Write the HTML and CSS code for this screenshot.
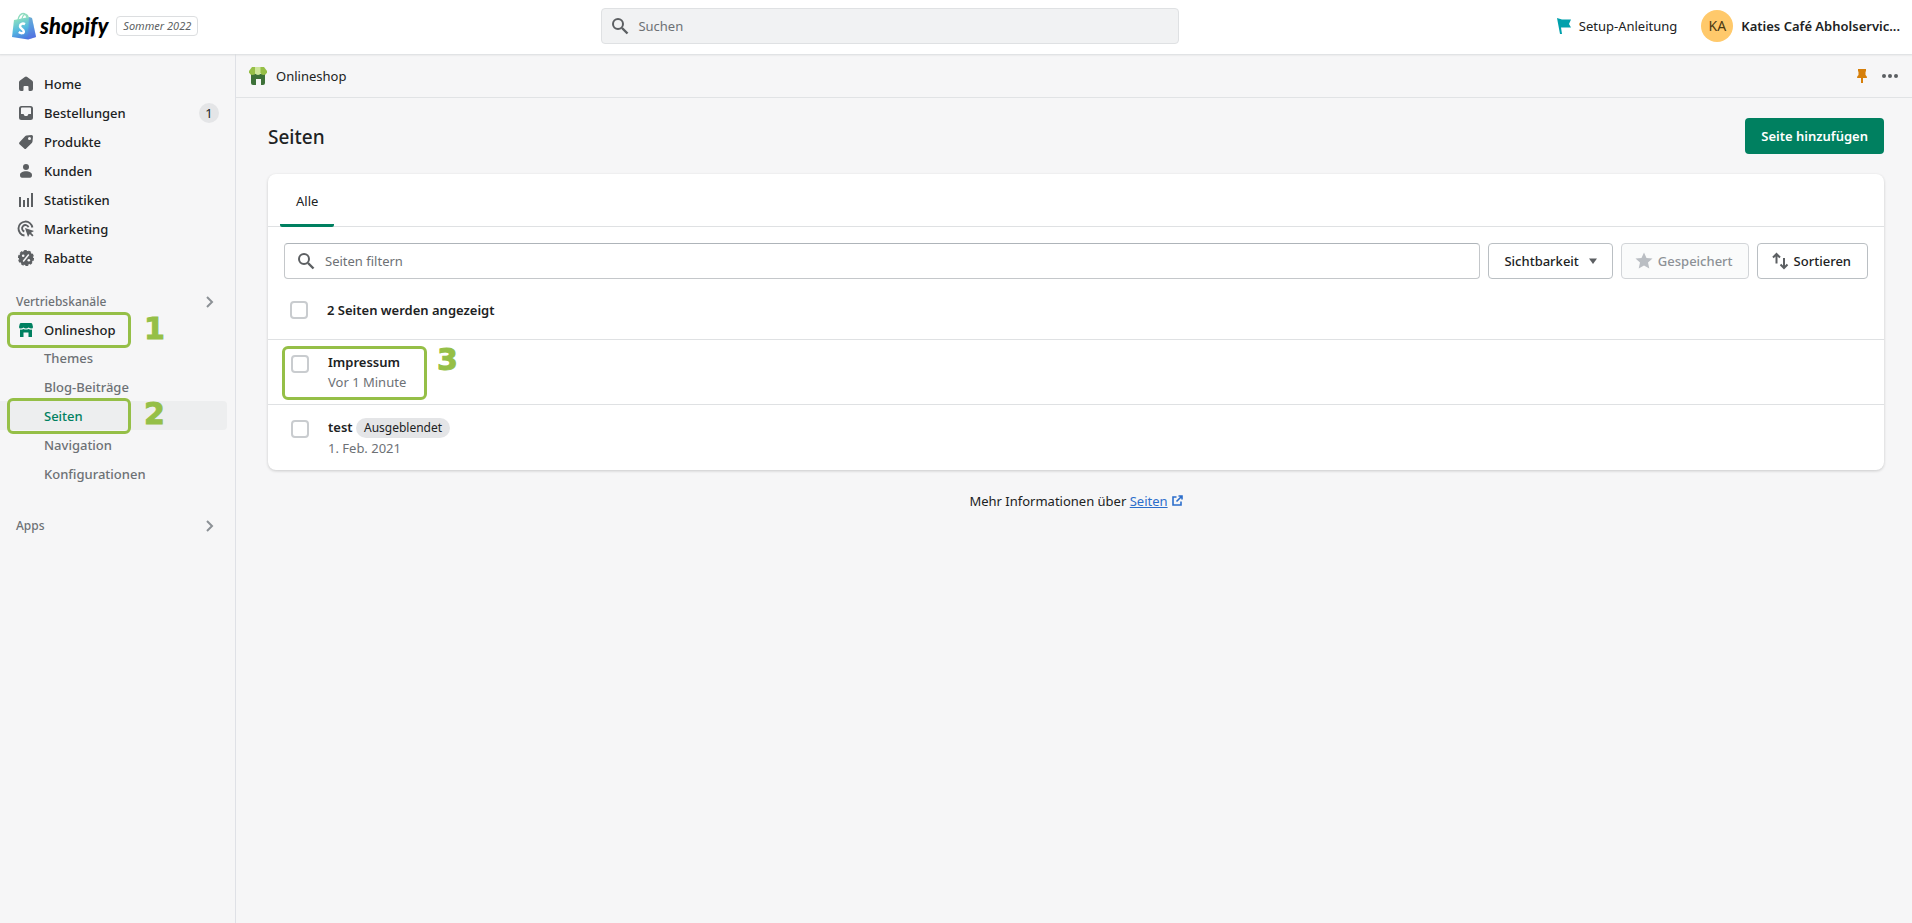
FILE: index.html
```html
<!DOCTYPE html>
<html lang="de">
<head>
<meta charset="utf-8">
<meta name="viewport" content="width=device-width, initial-scale=1">
<title>Seiten</title>
<link rel="stylesheet" href="styles.css">
</head>
<body>
<header class="topbar">
  <div class="brand">
    <svg class="bag" viewBox="0 0 26 28" aria-hidden="true">
      <defs><linearGradient id="bag" x1="0.3" y1="0" x2="0.7" y2="1"><stop offset="0" stop-color="#8fe3bd"/><stop offset=".5" stop-color="#55b9e0"/><stop offset="1" stop-color="#4a6be0"/></linearGradient></defs>
      <path d="M3 8 18 5l3 1 4 19-8 2.500L1 25z" fill="url(#bag)"/>
      <path d="m18 5 3 1 4 19-8 2.500z" fill="#5f78e0" opacity=".45"/>
      <path d="M7 8c.5-4 3-6.500 5-6.500S15.500 3 16 6M11 7c.5-3 2-5 4-4.500 1.500.4 2 1.500 2.300 3" fill="none" stroke="#8fdcc0" stroke-width="1.300"/>
      <path d="M14 12.200c-2.200-1.200-5-.5-5 2 0 2.800 3.800 2.800 3.800 5.200 0 2.200-2.800 2.200-5 .6" fill="none" stroke="#fff" stroke-width="2.500"/>
    </svg>
    <span class="wordmark">shopify</span>
    <span class="edition">Sommer 2022</span>
  </div>
  <label class="search">
    <svg class="icon" viewBox="0 0 20 20" aria-hidden="true"><circle cx="8" cy="8" r="5" fill="none" stroke="#5c5f62" stroke-width="2"/><path d="m12 12 5.500 5.500" stroke="#5c5f62" stroke-width="2.400"/></svg>
    <input type="search" placeholder="Suchen" aria-label="Suchen">
  </label>
  <div class="account">
    <button class="setup" type="button">
      <svg class="flag" viewBox="0 0 14 16" aria-hidden="true"><path d="m0 0 5 1.500h9L12 6l2 3.500H4L5 16H3z" fill="#00a0ac"/></svg>
      Setup-Anleitung
    </button>
    <button class="user" type="button"><span class="avatar">KA</span><span>Katies Café Abholservic...</span></button>
  </div>
</header>
<div class="shell">
  <nav class="sidebar">
    <a class="item" href="#"><svg class="icon" viewBox="0 0 20 20" aria-hidden="true"><path d="M8.800 3 3.700 6.800Q3 7.300 3 8.300V15q0 2 2 2h1.500q1 0 1-1v-3q0-1 1-1h3q1 0 1 1v3q0 1 1 1H15q2 0 2-2V8.300q0-1-.7-1.500L11.200 3Q10 2.200 8.800 3z"/></svg><span>Home</span></a>
    <a class="item" href="#"><svg class="icon" viewBox="0 0 20 20" aria-hidden="true"><path fill-rule="evenodd" d="M5.500 3h9Q17 3 17 5.500v9q0 2.500-2.500 2.500h-9Q3 17 3 14.500v-9Q3 3 5.500 3zm.5 1.600Q5 4.600 5 5.600V11h2.500l1.200 2h2.600l1.200-2H15V5.600q0-1-1-1z"/></svg><span>Bestellungen</span><span class="count">1</span></a>
    <a class="item" href="#"><svg class="icon" viewBox="0 0 20 20" aria-hidden="true"><path fill-rule="evenodd" d="M10.500 3.500 15.500 3Q17 3 17 4.500l-.5 5q-.1.800-.7 1.400l-5.600 5.600q-1 1-2 0L3.500 12.300q-1-1 0-2l5.600-6.100q.6-.6 1.400-.7zM13.500 5a1.500 1.500 0 1 0 0 3 1.500 1.500 0 0 0 0-3z"/></svg><span>Produkte</span></a>
    <a class="item" href="#"><svg class="icon" viewBox="0 0 20 20" aria-hidden="true"><circle cx="10" cy="6" r="3"/><path d="M4 14c0-5 12-5 12 0q0 2.800-2 2.800H6q-2 0-2-2.800z"/></svg><span>Kunden</span></a>
    <a class="item" href="#"><svg class="icon" viewBox="0 0 20 20" aria-hidden="true"><path d="M3 7h2v10H3zm4 3h2v7H7zm4-2h2v9h-2zm4-5h2v14h-2z"/></svg><span>Statistiken</span></a>
    <a class="item" href="#"><svg class="icon" viewBox="0 0 20 20" aria-hidden="true"><path d="M8.500 16.500A7 7 0 1 1 16.400 8.500M8.300 12.500A3.300 3.300 0 1 1 12.500 8.300" fill="none" stroke="#5c5f62" stroke-width="1.900"/><path d="m9 9 9 3-3 1.800 2.500 2.500-1.200 1.200L13.800 15 12 18z"/></svg><span>Marketing</span></a>
    <a class="item" href="#"><svg class="icon" viewBox="0 0 20 20" aria-hidden="true"><circle cx="10" cy="10" r="7.200"/><circle cx="10" cy="10" r="7.300" fill="none" stroke="#5c5f62" stroke-width="1.500" stroke-dasharray="2.800 1.780"/><path d="m12.800 6.500-5.600 7" stroke="#f6f6f7" stroke-width="1.500"/><circle cx="7.200" cy="7.800" r="1.300" fill="#f6f6f7"/><circle cx="12.800" cy="12.200" r="1.300" fill="#f6f6f7"/></svg><span>Rabatte</span></a>

    <button class="section" type="button"><span>Vertriebskanäle</span><svg class="chevron" viewBox="0 0 8 12" aria-hidden="true"><path d="m1 1 5 5-5 5" fill="none" stroke="#8c9196" stroke-width="2"/></svg></button>
    <a class="item channel marked" href="#"><svg class="icon shop" viewBox="0 0 20 20" aria-hidden="true"><path d="M5 3h10q1 0 1.300 1L17 7q0 1.500-1.500 1.500T12.500 7.500q-1 1-2.500 1T7.500 7.500q-1 1-3 1Q3 8.500 3 7l.7-3Q4 3 5 3z"/><path d="M4 9.600q2 .3 3.500-.6 2.500 1 5 0 1.500.9 3.500.6V17h-3.500v-4.500h-5V17H4z"/></svg><span>Onlineshop</span><b class="step">1</b></a>
    <a class="item sub" href="#">Themes</a>
    <a class="item sub" href="#">Blog-Beiträge</a>
    <a class="item sub current marked" href="#" aria-current="page">Seiten<b class="step">2</b></a>
    <a class="item sub" href="#">Navigation</a>
    <a class="item sub" href="#">Konfigurationen</a>
    <button class="section apps" type="button"><span>Apps</span><svg class="chevron" viewBox="0 0 8 12" aria-hidden="true"><path d="m1 1 5 5-5 5" fill="none" stroke="#8c9196" stroke-width="2"/></svg></button>
  </nav>
  <div class="content">
    <div class="appbar">
      <svg class="appicon" viewBox="0 0 18 18" aria-hidden="true"><path d="M2 7h14v9q0 2-2 2h-2v-6H7v6H4q-2 0-2-2z" fill="#3d7138"/><path d="M3 0h4v6q-1 2-3.500 2T0 5.500V4z" fill="#96bf47"/><path d="M6 0h6v6q-1 2-3 2T6 6z" fill="#cde59a"/><path d="M11.500 0H15l3 4v1.500Q17 8 14.500 8T11.500 6z" fill="#96bf47"/></svg>
      <span>Onlineshop</span>
      <div class="appactions">
        <button class="plain" type="button" aria-label="Anheften"><svg class="pin" viewBox="0 0 10 14" aria-hidden="true"><path d="M1 0h8v2L8.500 3v3q1.500 1 1.500 3H6v5H4V9H0q0-2 1.500-3V3L1 2z" fill="#d67f0a"/></svg></button>
        <button class="plain" type="button" aria-label="Mehr Aktionen"><svg class="dots" viewBox="0 0 16 4" aria-hidden="true"><circle cx="2" cy="2" r="2"/><circle cx="8" cy="2" r="2"/><circle cx="14" cy="2" r="2"/></svg></button>
      </div>
    </div>
    <main class="page">
      <div class="heading"><h1>Seiten</h1><button class="primary" type="button">Seite hinzufügen</button></div>
      <section class="card">
        <div class="tabs" role="tablist"><button class="tab" type="button" role="tab" aria-selected="true">Alle</button></div>
        <div class="filters">
          <label class="filter">
            <svg class="icon" viewBox="0 0 20 20" aria-hidden="true"><circle cx="8" cy="8" r="5" fill="none" stroke="#5c5f62" stroke-width="2"/><path d="m12 12 5.500 5.500" stroke="#5c5f62" stroke-width="2.400"/></svg>
            <input type="text" placeholder="Seiten filtern" aria-label="Seiten filtern">
          </label>
          <button class="button visibility" type="button">Sichtbarkeit<svg class="caret" viewBox="0 0 8 6" aria-hidden="true"><path d="M0 .5h8L4 6z"/></svg></button>
          <button class="button saved" type="button" disabled><svg class="icon" viewBox="0 0 20 20" aria-hidden="true"><path d="m10 1.500 2.500 5.500 6 .6-4.500 4 1.300 6-5.300-3-5.300 3 1.300-6-4.500-4 6-.6z"/></svg>Gespeichert</button>
          <button class="button sort" type="button"><svg class="icon" viewBox="0 0 20 20" aria-hidden="true"><path d="M6.500 3V12.500M3 6.500 6.500 3 10 6.500M14 7v10M10.500 13.500 14 17l3.500-3.500" fill="none" stroke="#5c5f62" stroke-width="2"/></svg>Sortieren</button>
        </div>
        <div class="row summary"><input class="check" type="checkbox" id="all"><label for="all">2 Seiten werden angezeigt</label></div>
        <div class="row framed"><input class="check" type="checkbox" id="p1"><div><label for="p1">Impressum</label><p>Vor 1 Minute</p></div><b class="step">3</b></div>
        <div class="row"><input class="check" type="checkbox" id="p2"><div><label for="p2">test</label> <span class="badge">Ausgeblendet</span><p>1. Feb. 2021</p></div></div>
      </section>
      <p class="more">Mehr Informationen über <a href="#">Seiten<svg class="external" viewBox="0 0 11 11" aria-hidden="true"><path d="M4.500 2H1v8h8V6.500M6.500 1H10v3.500M10 1 4.500 6.500" fill="none" stroke="#2c6ecb" stroke-width="1.600"/></svg></a></p>
    </main>
  </div>
</div>
</body>
</html>
```
FILE: styles.css
```css
*, *::before, *::after { box-sizing: border-box; }
body {
  margin: 0;
  min-height: 100vh;
  display: flex;
  flex-direction: column;
  background: #f6f6f7;
  color: #202223;
  font: 13px/20px "Segoe UI", "Noto Sans", "Open Sans", sans-serif;
}
button, input { font: inherit; color: inherit; }
button { border: 0; padding: 0; background: none; cursor: pointer; }
a { color: inherit; text-decoration: none; }
h1, p { margin: 0; }
.icon { width: 20px; height: 20px; flex: none; fill: #5c5f62; }

.topbar {
  position: relative;
  height: 54px;
  flex: none;
  display: grid;
  grid-template-columns: 45fr 580px 55fr;
  align-items: center;
  padding-bottom: 2px;
  background: #fff;
  box-shadow: 0 0 2px 1px #d8dadc;
}
.brand { display: flex; align-items: center; padding-left: 11px; }
.bag { width: 26px; height: 28px; }
.wordmark { margin-left: 3px; font-size: 22px; line-height: 28px; font-weight: 900; font-style: italic; font-family: Lato, sans-serif; color: #000; }
.edition { margin-left: 8px; padding: 0 6px; border: 1px solid #dcdee0; border-radius: 4px; font-size: 11px; line-height: 18px; font-style: italic; color: #5c5f62; }
.search { display: flex; align-items: center; gap: 8px; height: 36px; padding: 0 8px; margin-left: 2px; border: 1px solid #dfe1e3; border-radius: 4px; background: #f1f2f3; }
.search input, .filter input { flex: 1; min-width: 0; border: 0; padding: 0; background: none; outline: 0; }
input::placeholder { color: #6d7175; opacity: 1; }
.account { display: flex; justify-content: flex-end; align-items: center; gap: 24px; padding-right: 12px; }
.setup, .user { display: flex; align-items: center; gap: 8px; }
.flag { width: 14px; height: 16px; }
.user { font-weight: 600; }
.avatar { width: 32px; height: 32px; border-radius: 50%; background: #ffc96b; line-height: 32px; font-size: 14px; font-weight: 400; color: #4d3a12; }

.shell { flex: 1; display: grid; grid-template-columns: 236px 1fr; }
.sidebar { padding: 15px 8px 16px 0; border-right: 1px solid #dfe1e6; }
.item { position: relative; display: flex; align-items: center; height: 29px; padding-left: 16px; font-weight: 500; }
.item .icon { margin-right: 8px; }
.count { margin-left: auto; margin-right: 8px; width: 20px; border-radius: 10px; background: #e4e5e7; text-align: center; font-weight: 400; }
.section { display: flex; align-items: center; justify-content: space-between; width: 100%; height: 28px; margin-top: 16px; padding: 0 13px 0 16px; font-size: 12px; font-weight: 500; color: #6d7175; }
.chevron { width: 8px; height: 12px; }
.apps { margin-top: 24px; }
.channel { height: 27px; }
.item .shop { fill: #008060; }
.sub { padding-left: 44px; color: #6d7175; }
.current { background: #edeeef; border-radius: 0 4px 4px 0; color: #008060; }

.step { position: absolute; color: #95bf47; font: bold 30px/30px "DejaVu Sans", sans-serif; -webkit-text-stroke: 1px #95bf47; }
.marked .step { left: 144px; top: -2px; }
.marked::after, .framed::after { content: ""; position: absolute; border: 3px solid #95bf47; border-radius: 6px; }
.marked::after { left: 7px; width: 124px; top: 50%; height: 36px; margin-top: -18px; }

.content { min-width: 0; }
.appbar { display: flex; align-items: center; gap: 9px; height: 44px; padding: 0 14px 0 13px; border-bottom: 1px solid #e1e3e5; }
.appicon { width: 18px; height: 18px; }
.appactions { display: flex; align-items: center; gap: 15px; margin-left: auto; }
.plain { display: flex; }
.pin { width: 10px; height: 14px; }
.dots { width: 16px; height: 4px; fill: #5c5f62; }
.page { padding: 20px 28px 20px 32px; }
.heading { display: flex; align-items: center; justify-content: space-between; margin-bottom: 20px; }
h1 { padding-top: 2px; font-size: 19px; line-height: 28px; font-weight: 500; }
.primary { height: 36px; padding: 0 16px; border-radius: 4px; background: #008060; color: #fff; font-weight: 600; }

.card { background: #fff; border-radius: 8px; box-shadow: 0 1px 3px rgba(23, 24, 24, .2); }
.tabs { display: flex; height: 53px; padding-left: 12px; border-bottom: 1px solid #dfe1e3; }
.tab { height: 53px; padding: 0 16px; border-top: 3px solid transparent; border-bottom: 3px solid #008060; border-radius: 2px; }
.filters { display: flex; gap: 8px; padding: 16px 16px 0; }
.filter { flex: 1; display: flex; align-items: center; gap: 9px; height: 36px; padding: 0 11px; border: 1px solid #c4c7ca; border-top-color: #aeb4b9; border-radius: 4px; }
.button { display: flex; align-items: center; height: 36px; padding: 0 15px; border: 1px solid #babfc3; border-radius: 4px; font-weight: 500; }
.caret { width: 8px; height: 6px; margin-left: 10px; fill: #5c5f62; }
.saved { gap: 4px; padding-left: 12px; border-color: #d2d5d8; background: #fafbfb; color: #8c9196; }
.saved .icon { fill: #babec3; }
.sort { gap: 4px; padding: 0 16px 0 12px; }
.row { position: relative; display: flex; gap: 19px; padding: 12px 23px; border-top: 1px solid #dfe1e3; }
.summary { align-items: center; min-height: 60px; padding: 6px 22px 4px; border-top: 0; }
.row label { font-weight: 600; }
.row p { color: #6d7175; }
.check { appearance: none; flex: none; width: 18px; height: 18px; margin: 3px 0 0; border: 2px solid #c9cccf; border-radius: 4px; background: #fff; }
.summary .check { margin: 0; }
.framed::after { left: 14px; top: 6px; width: 145px; height: 54px; }
.framed .step { left: 169px; top: 5px; }
.badge { display: inline-block; padding: 0 8px; border-radius: 10px; background: #e4e5e7; font-size: 12px; }
.more { margin-top: 21px; text-align: center; }
.more a { color: #2c6ecb; text-decoration: underline; }
.external { width: 11px; height: 11px; margin-left: 4px; }
```
